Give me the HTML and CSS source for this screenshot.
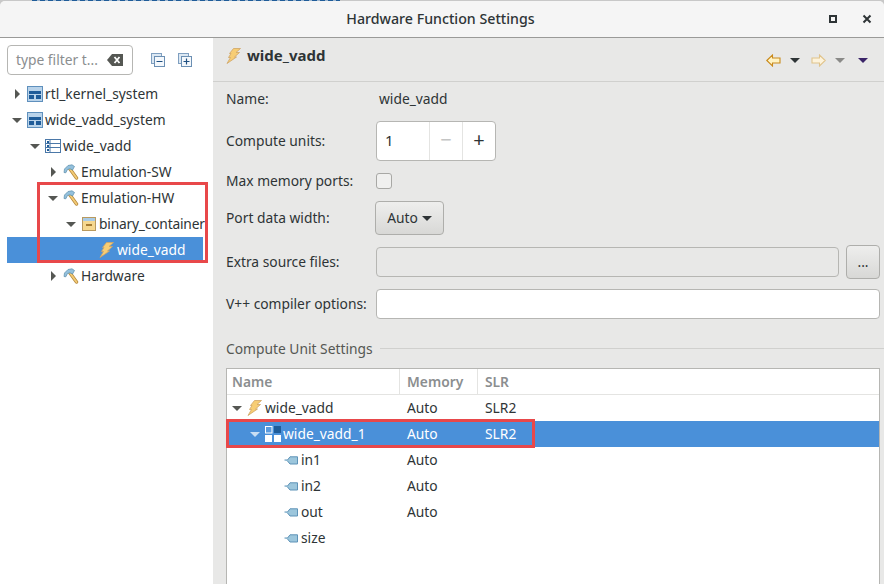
FILE: index.html
```html
<!DOCTYPE html>
<html lang="en">
<head>
    <meta charset="UTF-8">
    <meta name="viewport" content="width=device-width, initial-scale=1.0">
    <title>Hardware Function Settings</title>
    <link rel="stylesheet" href="styles.css">
</head>
<body>
    <svg class="defs" width="0" height="0">
        <defs>
            <symbol id="bolt" viewBox="0 0 16 16">
                <path d="M7.5 .5 L14.5 .5 L10 4.5 L13.5 4.5 L8.5 9 L10.5 9 L1 15.5 L4.5 9.5 L2.5 9.5 L5 5.5 L3.5 5.5 Z" fill="#f7cd74" stroke="#cfa566" stroke-width=".8"/>
            </symbol>
            <symbol id="hammer" viewBox="0 0 16 16">
                <path d="M7 5 L13.5 14" stroke="#b58a3e" stroke-width="3.4" stroke-linecap="round"/>
                <path d="M7 5 L13.5 14" stroke="#f4cb76" stroke-width="1.9" stroke-linecap="round"/>
                <path d="M1 8.5 L1.5 5 L5 1.5 L9 .8 L11.5 2.5 L9.5 6 L7 4.8 L4.5 5.5 L2.8 8.8 Z" fill="#93c0dc" stroke="#5a8cab" stroke-width=".7"/>
            </symbol>
            <symbol id="system" viewBox="0 0 16 16">
                <rect x=".5" y=".5" width="15" height="15" fill="#b9d3ea" stroke="#5f90bd"/>
                <rect x="2" y="5" width="12" height="3" fill="#1f5c99"/>
                <rect x="2" y="9" width="5" height="4" fill="#1f5c99"/>
                <rect x="9" y="9" width="5" height="4" fill="#1f5c99"/>
            </symbol>
            <symbol id="project" viewBox="0 0 16 16">
                <rect x=".5" y="1.5" width="15" height="13" fill="#fff" stroke="#4b78a8"/>
                <path d="M5 2 V14 M1 5.5 H15 M1 9.5 H15" stroke="#4b78a8"/>
                <rect x="2" y="3" width="2" height="2" fill="#1f5c99"/>
                <rect x="2" y="7" width="2" height="2" fill="#1f5c99"/>
                <rect x="2" y="11" width="2" height="2" fill="#1f5c99"/>
            </symbol>
            <symbol id="container" viewBox="0 0 16 16">
                <rect x="1.5" y="1.5" width="13" height="13" fill="#f6d88f" stroke="#b99a5f"/>
                <rect x="2" y="2" width="12" height="3" fill="#a9cbe6"/>
                <rect x="5" y="8" width="6" height="2" fill="#a67c32"/>
            </symbol>
            <symbol id="port" viewBox="0 0 14 9">
                <path d="M.5 4 H3.5 L6 .8 H13.5 V8 H6 L3.5 5" fill="#9cc6dc" stroke="#5e93b8"/>
            </symbol>
        </defs>
    </svg>

    <div class="desktop-strip"></div>
    <div class="window">
        <header class="titlebar">
            <h1>Hardware Function Settings</h1>
            <div class="window-buttons">
                <span class="maximize"></span>
                <svg width="10" height="10" viewBox="0 0 10 10"><path d="M1.5 1.5 L8.5 8.5 M8.5 1.5 L1.5 8.5" stroke="#2e3436" stroke-width="2"/></svg>
            </div>
        </header>

        <div class="content">
            <aside class="sidebar">
                <div class="filter-row">
                    <div class="filter">
                        <span class="filter-text">type filter t...</span>
                        <svg width="16" height="12" viewBox="0 0 16 12"><path d="M5 0 H16 V12 H5 L0 6 Z" fill="#555753"/><path d="M7.5 3 L12.5 9 M12.5 3 L7.5 9" stroke="#fff" stroke-width="1.8"/></svg>
                    </div>
                    <svg class="tree-tool" width="14" height="14" viewBox="0 0 14 14"><rect x=".5" y=".5" width="10" height="10" fill="#dce8f3" stroke="#7f9fc0"/><rect x="3.5" y="3.5" width="10" height="10" fill="#f4f8fc" stroke="#6b8fb3"/><path d="M5.5 8.5 H11.5" stroke="#1f4f80" stroke-width="1.2"/></svg>
                    <svg class="tree-tool" width="14" height="14" viewBox="0 0 14 14"><rect x=".5" y=".5" width="10" height="10" fill="#dce8f3" stroke="#7f9fc0"/><rect x="3.5" y="3.5" width="10" height="10" fill="#f4f8fc" stroke="#6b8fb3"/><path d="M5.5 8.5 H11.5 M8.5 5.5 V11.5" stroke="#1f4f80" stroke-width="1.2"/></svg>
                </div>
                <ul class="tree">
                    <li class="node"><i class="arrow closed"></i><svg class="icon"><use href="#system"/></svg><span>rtl_kernel_system</span></li>
                    <li class="node"><i class="arrow open"></i><svg class="icon"><use href="#system"/></svg><span>wide_vadd_system</span></li>
                    <li class="node depth-1"><i class="arrow open"></i><svg class="icon"><use href="#project"/></svg><span>wide_vadd</span></li>
                    <li class="node depth-2"><i class="arrow closed"></i><svg class="icon"><use href="#hammer"/></svg><span>Emulation-SW</span></li>
                    <li class="node depth-2"><i class="arrow open"></i><svg class="icon"><use href="#hammer"/></svg><span>Emulation-HW</span></li>
                    <li class="node depth-3"><i class="arrow open"></i><svg class="icon"><use href="#container"/></svg><span>binary_container</span></li>
                    <li class="node depth-4 selected"><i class="arrow none"></i><svg class="icon"><use href="#bolt"/></svg><span>wide_vadd</span></li>
                    <li class="node depth-2"><i class="arrow closed"></i><svg class="icon"><use href="#hammer"/></svg><span>Hardware</span></li>
                </ul>
            </aside>

            <main class="panel">
                <div class="panel-head">
                    <svg class="icon"><use href="#bolt"/></svg>
                    <h2>wide_vadd</h2>
                    <div class="nav-tools">
                        <svg width="15" height="13" viewBox="0 0 15 13"><path d="M.8 6.5 L6.5 1 V4 H14 V9 H6.5 V12 Z" fill="#fff3c4" stroke="#c98a1c" stroke-width="1.1"/></svg>
                        <i class="drop"></i>
                        <svg class="nav-next" width="15" height="13" viewBox="0 0 15 13"><path d="M14.2 6.5 L8.5 1 V4 H1 V9 H8.5 V12 Z" fill="#fdf3dc" stroke="#e0c48c" stroke-width="1.1"/></svg>
                        <i class="drop faded"></i>
                        <i class="drop purple"></i>
                    </div>
                </div>

                <div class="form">
                    <div class="row row-name"><label>Name:</label><span>wide_vadd</span></div>
                    <div class="row row-units">
                        <label>Compute units:</label>
                        <div class="spin">
                            <span class="spin-value">1</span>
                            <span class="spin-btn off">&minus;</span>
                            <span class="spin-btn">+</span>
                        </div>
                    </div>
                    <div class="row row-ports"><label>Max memory ports:</label><span class="checkbox"></span></div>
                    <div class="row row-width">
                        <label>Port data width:</label>
                        <button class="btn combo">Auto<i class="drop small"></i></button>
                    </div>
                    <div class="row row-extra">
                        <label>Extra source files:</label>
                        <div class="entry disabled"></div>
                        <button class="btn dots">...</button>
                    </div>
                    <div class="row row-vpp">
                        <label>V++ compiler options:</label>
                        <div class="entry"></div>
                    </div>
                </div>

                <div class="group-title"><span>Compute Unit Settings</span></div>

                <div class="table">
                    <div class="tr th"><div class="c-name">Name</div><div class="c-mem">Memory</div><div class="c-slr">SLR</div></div>
                    <div class="tr"><div class="c-name"><i class="arrow open"></i><svg class="icon"><use href="#bolt"/></svg><span>wide_vadd</span></div><div class="c-mem">Auto</div><div class="c-slr">SLR2</div></div>
                    <div class="tr selected">
                        <div class="c-name indent-1"><i class="arrow open"></i>
                            <svg class="icon" viewBox="0 0 16 16"><rect x=".5" y=".5" width="6.5" height="6.5" fill="#5a9ade" stroke="#fff"/><rect x="9" y="0" width="7" height="7" fill="#1f5c99"/><rect x="0" y="9" width="7" height="7" fill="#fff"/><rect x="9" y="9" width="7" height="7" fill="#fff"/></svg><span>wide_vadd_1</span></div>
                        <div class="c-mem">Auto</div><div class="c-slr">SLR2</div>
                    </div>
                    <div class="tr"><div class="c-name indent-2"><svg class="port"><use href="#port"/></svg><span>in1</span></div><div class="c-mem">Auto</div></div>
                    <div class="tr"><div class="c-name indent-2"><svg class="port"><use href="#port"/></svg><span>in2</span></div><div class="c-mem">Auto</div></div>
                    <div class="tr"><div class="c-name indent-2"><svg class="port"><use href="#port"/></svg><span>out</span></div><div class="c-mem">Auto</div></div>
                    <div class="tr"><div class="c-name indent-2"><svg class="port"><use href="#port"/></svg><span>size</span></div></div>
                </div>
            </main>
        </div>

        <!-- red callouts drawn on the screenshot -->
        <div class="callout callout-tree"></div>
        <div class="callout callout-table"></div>
    </div>
</body>
</html>
```

FILE: styles.css
```css
* {
    box-sizing: border-box;
}
body {
    margin: 0;
    width: 884px;
    height: 584px;
    overflow: hidden;
    font-family: "Noto Sans", sans-serif;
    font-size: 13.8px;
    color: #2e3436;
    background: #c8c8c8;
}
.defs {
    position: absolute;
}
ul {
    list-style: none;
    margin: 0;
    padding: 0;
}
h1, h2 {
    margin: 0;
}
i {
    display: block;
}
/* sliver of the window behind the dialog */
.desktop-strip {
    height: 1px;
    margin-left: 32px;
    width: 308px;
    background: repeating-linear-gradient(90deg, #1f5c99 0 5px, #9db6d0 5px 8px);
}
.window {
    position: relative;
    height: 583px;
    display: flex;
    flex-direction: column;
    border-radius: 5px 5px 0 0;
    overflow: hidden;
    background: #e8e8e7;
}
.titlebar {
    height: 37px;
    flex: none;
    position: relative;
    display: flex;
    align-items: center;
    justify-content: center;
    padding: 0 3px 2px 0;
    background: #f5f5f5;
    border-bottom: 1px solid #9a9a98;
}
.titlebar h1 {
    font-size: 14.2px;
    font-weight: 500;
    color: #2e3436;
}
.window-buttons {
    position: absolute;
    right: 12px;
    top: 13px;
    display: flex;
    align-items: center;
    gap: 25px;
}
.maximize {
    width: 8px;
    height: 8px;
    border: 2px solid #2e3436;
}
.content {
    flex: 1;
    display: flex;
    min-height: 0;
}
.sidebar {
    width: 213px;
    flex: none;
    background: #fff;
    padding: 7px 10px 0 7px;
}
.filter-row {
    display: flex;
    align-items: center;
    height: 30px;
}
.filter {
    width: 126px;
    height: 30px;
    flex: none;
    display: flex;
    align-items: center;
    justify-content: space-between;
    padding: 0 9px 0 8px;
    border: 1px solid #b6b6b3;
    border-radius: 4px;
    background: #fff;
}
.filter-text {
    color: #8b8e8f;
    padding-bottom: 2px;
}
.tree-tool {
    margin-left: 18px;
}
.tree-tool + .tree-tool {
    margin-left: 13px;
}
.tree {
    margin-top: 6px;
}
.node {
    height: 26px;
    display: flex;
    align-items: center;
    white-space: nowrap;
    color: #2e3436;
    padding-left: 4px;
}
.node span,
.tr .c-name span,
.tr > div:not(.c-name) {
    padding-bottom: 2px;
}
.depth-1 { padding-left: 22px; }
.depth-2 { padding-left: 40px; }
.depth-3 { padding-left: 58px; letter-spacing: -.2px; }
.depth-4 { padding-left: 76px; }
.node.selected,
.tr.selected {
    background: #4a90d9;
    color: #fff;
}
.arrow {
    width: 14px;
    height: 14px;
    flex: none;
    position: relative;
    margin-right: 2px;
}
.arrow.closed::after {
    content: "";
    position: absolute;
    left: 4px;
    top: 2px;
    border-left: 5px solid #555753;
    border-top: 5px solid transparent;
    border-bottom: 5px solid transparent;
}
.arrow.open::after {
    content: "";
    position: absolute;
    left: 1px;
    top: 5px;
    border-top: 5px solid #555753;
    border-left: 5px solid transparent;
    border-right: 5px solid transparent;
}
.selected .arrow.open::after {
    border-top-color: #c8def3;
}
.icon {
    width: 16px;
    height: 16px;
    flex: none;
    margin-right: 2px;
}
.panel {
    flex: 1;
    min-width: 0;
    display: flex;
    flex-direction: column;
}
.panel-head {
    height: 44px;
    flex: none;
    display: flex;
    align-items: center;
    padding: 0 16px 7px 13px;
    border-bottom: 1px solid #d0d0ce;
}
.panel-head h2 {
    font-size: 15px;
    font-weight: 700;
    margin-left: 3px;
    padding-bottom: 3px;
}
.nav-tools {
    margin-left: auto;
    padding-top: 8px;
    display: flex;
    align-items: center;
}
.drop {
    width: 0;
    height: 0;
    border-top: 5px solid #2e3436;
    border-left: 5px solid transparent;
    border-right: 5px solid transparent;
    margin-left: 9px;
}
.drop.faded {
    border-top-color: #8a8a88;
}
.drop.purple {
    border-top-color: #3a2468;
    margin-left: 13px;
}
.nav-next {
    margin-left: 11px;
}
.form {
    padding-left: 13px;
    padding-right: 4px;
}
.row {
    display: flex;
    align-items: center;
}
.row label {
    width: 150px;
    flex: none;
    padding-bottom: 2px;
}
.row-name { height: 34px; }
.row-name span { margin-left: 3px; padding-bottom: 2px; }
.row-units { height: 40px; margin-top: 5px; }
.row-ports { height: 16px; margin-top: 12px; }
.row-width { height: 34px; margin-top: 12px; }
.row-extra { height: 34px; margin-top: 10px; }
.row-vpp { height: 30px; margin-top: 10px; }
.spin {
    width: 120px;
    height: 40px;
    display: flex;
    align-items: center;
    background: #fff;
    border: 1px solid #b6b6b3;
    border-radius: 4px;
}
.spin-value {
    width: 52px;
    padding-left: 8px;
    padding-bottom: 2px;
    font-size: 15px;
}
.spin-btn {
    width: 33px;
    height: 38px;
    line-height: 36px;
    text-align: center;
    font-size: 20px;
    border-left: 1px solid #e4e4e2;
}
.spin-btn.off {
    color: #c4c5c5;
}
.checkbox {
    width: 16px;
    height: 16px;
    border: 1px solid #a8a8a5;
    border-radius: 3px;
    background: #f0f0ef;
}
.btn {
    font: inherit;
    color: #2e3436;
    height: 34px;
    border: 1px solid #aeaeab;
    border-radius: 4px;
    background: linear-gradient(#eeeeed, #d8d8d6);
    padding: 0 0 2px;
}
.combo {
    width: 69px;
    margin-left: -1px;
    display: flex;
    align-items: center;
    justify-content: center;
}
.drop.small {
    margin-left: 4px;
    margin-top: 2px;
}
.dots {
    width: 34px;
    margin-left: 7px;
}
.entry {
    flex: 1;
    height: 30px;
    background: #fff;
    border: 1px solid #b6b6b3;
    border-radius: 4px;
}
.entry.disabled {
    background: #e8e8e7;
}
.group-title {
    margin-top: 20px;
    padding-left: 13px;
    display: flex;
    align-items: center;
    color: #555753;
}
.group-title::after {
    content: "";
    flex: 1;
    height: 1px;
    margin-left: 7px;
    background: #d0d0ce;
}
.table {
    flex: 1;
    margin: 10px 4px 0 13px;
    background: #fff;
    border: 1px solid #b6b6b3;
    border-bottom: 0;
}
.tr {
    height: 26px;
    display: flex;
    align-items: center;
    white-space: nowrap;
}
.c-name {
    width: 173px;
    display: flex;
    align-items: center;
    padding-left: 4px;
}
.c-mem {
    width: 78px;
    padding-left: 7px;
}
.c-slr {
    padding-left: 7px;
}
.th {
    color: #8b8e8f;
    font-weight: 600;
    border-bottom: 1px solid #e4e4e2;
}
.th div {
    height: 25px;
    line-height: 26px;
    border-right: 1px solid #e4e4e2;
}
.th .c-name {
    padding-left: 5px;
}
.th .c-slr {
    border-right: 0;
}
.indent-1 { padding-left: 22px; }
.indent-2 { padding-left: 57px; }
.port {
    width: 14px;
    height: 9px;
    flex: none;
    margin-right: 3px;
}
.callout {
    position: absolute;
    border: 3px solid #e8484a;
    pointer-events: none;
}
.callout-tree {
    left: 37px;
    top: 181px;
    width: 171px;
    height: 81px;
}
.callout-table {
    left: 226px;
    top: 418px;
    width: 309px;
    height: 29px;
}
```
